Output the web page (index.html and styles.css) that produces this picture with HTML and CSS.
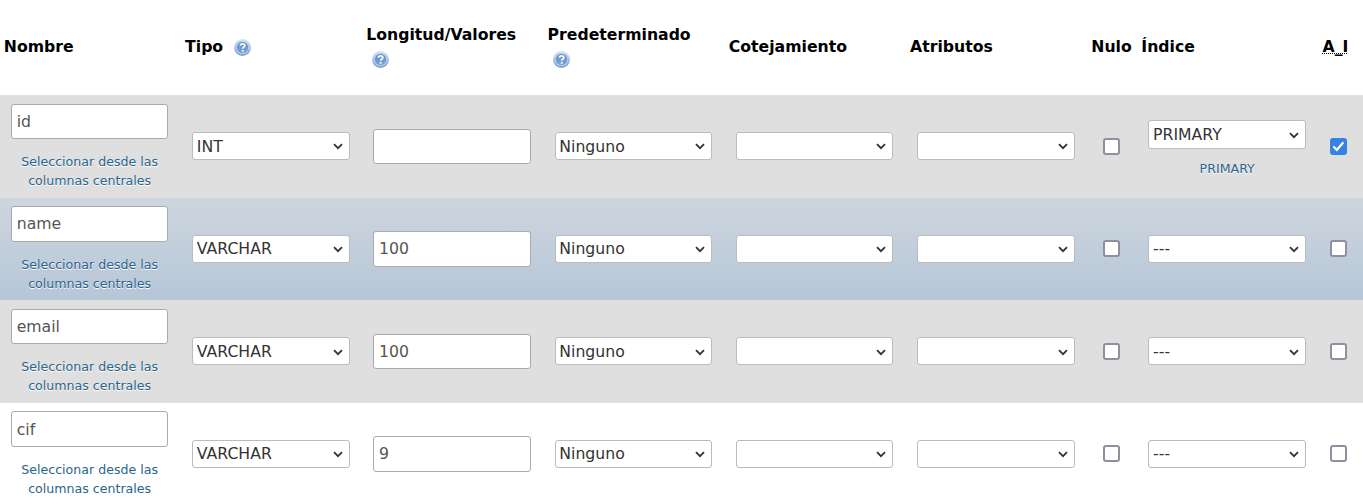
FILE: index.html
```html
<!DOCTYPE html>
<html lang="es">
<head>
<meta charset="utf-8">
<title>Columnas</title>
<link rel="stylesheet" href="styles.css">
</head>
<body>
<svg width="0" height="0" class="defs">
  <defs>
    <linearGradient id="ring" x1="0" y1="0" x2="0" y2="1"><stop offset="0" stop-color="#dce8f6"/><stop offset="1" stop-color="#7f9ec8"/></linearGradient>
    <linearGradient id="disc" x1="0" y1="0" x2="0" y2="1"><stop offset="0" stop-color="#5f8cc6"/><stop offset="1" stop-color="#79a5d8"/></linearGradient>
    <symbol id="help" viewBox="0 0 17 17">
      <circle cx="8.5" cy="8.5" r="8.5" fill="url(#ring)"/>
      <circle cx="8.5" cy="8.5" r="6.6" fill="#b4cdea"/>
      <circle cx="8.5" cy="8.5" r="5.6" fill="url(#disc)"/>
      <path d="M6.4 6.7C6.5 4.3 10.8 4.3 10.8 6.6C10.8 8.1 8.7 8 8.7 9.7M8.7 10.9V12.7" fill="none" stroke="#f4f8fd" stroke-width="1.9"/>
    </symbol>
    <symbol id="chevron" viewBox="0 0 10 7"><path d="M1 1.2L5 5.2L9 1.2" fill="none" stroke="#333" stroke-width="1.8"/></symbol>
  </defs>
</svg>
<main class="columns">
  <div class="row head">
    <div class="title">Nombre</div>
    <div class="title">Tipo <svg class="help"><use href="#help"/></svg></div>
    <div class="title">Longitud/Valores <svg class="help"><use href="#help"/></svg></div>
    <div class="title">Predeterminado <svg class="help"><use href="#help"/></svg></div>
    <div class="title">Cotejamiento</div>
    <div class="title">Atributos</div>
    <div class="title">Nulo</div>
    <div class="title">Índice</div>
    <div class="title"><abbr>A_I</abbr></div>
  </div>
  <div class="row odd">
    <div class="name"><input class="text" value="id"><a class="link">Seleccionar desde las columnas centrales</a></div>
    <div class="cell"><div class="pick"><select><option>INT</option></select><svg><use href="#chevron"/></svg></div></div>
    <div class="cell"><input class="text" value=""></div>
    <div class="cell"><div class="pick"><select><option>Ninguno</option></select><svg><use href="#chevron"/></svg></div></div>
    <div class="cell"><div class="pick"><select><option></option></select><svg><use href="#chevron"/></svg></div></div>
    <div class="cell"><div class="pick"><select><option></option></select><svg><use href="#chevron"/></svg></div></div>
    <div class="check"><span class="box"></span></div>
    <div class="cell index"><div class="pick"><select><option>PRIMARY</option></select><svg><use href="#chevron"/></svg></div><a class="link">PRIMARY</a></div>
    <div class="check"><span class="box checked"><svg viewBox="0 0 17 17"><path d="M3.9 9L6.8 11.9L12.8 5" fill="none" stroke="#fff" stroke-width="2.2" stroke-linecap="round"/></svg></span></div>
  </div>
  <div class="row marked">
    <div class="name"><input class="text" value="name"><a class="link">Seleccionar desde las columnas centrales</a></div>
    <div class="cell"><div class="pick"><select><option>VARCHAR</option></select><svg><use href="#chevron"/></svg></div></div>
    <div class="cell"><input class="text" value="100"></div>
    <div class="cell"><div class="pick"><select><option>Ninguno</option></select><svg><use href="#chevron"/></svg></div></div>
    <div class="cell"><div class="pick"><select><option></option></select><svg><use href="#chevron"/></svg></div></div>
    <div class="cell"><div class="pick"><select><option></option></select><svg><use href="#chevron"/></svg></div></div>
    <div class="check"><span class="box"></span></div>
    <div class="cell"><div class="pick"><select><option>---</option></select><svg><use href="#chevron"/></svg></div></div>
    <div class="check"><span class="box"></span></div>
  </div>
  <div class="row odd">
    <div class="name"><input class="text" value="email"><a class="link">Seleccionar desde las columnas centrales</a></div>
    <div class="cell"><div class="pick"><select><option>VARCHAR</option></select><svg><use href="#chevron"/></svg></div></div>
    <div class="cell"><input class="text" value="100"></div>
    <div class="cell"><div class="pick"><select><option>Ninguno</option></select><svg><use href="#chevron"/></svg></div></div>
    <div class="cell"><div class="pick"><select><option></option></select><svg><use href="#chevron"/></svg></div></div>
    <div class="cell"><div class="pick"><select><option></option></select><svg><use href="#chevron"/></svg></div></div>
    <div class="check"><span class="box"></span></div>
    <div class="cell"><div class="pick"><select><option>---</option></select><svg><use href="#chevron"/></svg></div></div>
    <div class="check"><span class="box"></span></div>
  </div>
  <div class="row">
    <div class="name"><input class="text" value="cif"><a class="link">Seleccionar desde las columnas centrales</a></div>
    <div class="cell"><div class="pick"><select><option>VARCHAR</option></select><svg><use href="#chevron"/></svg></div></div>
    <div class="cell"><input class="text" value="9"></div>
    <div class="cell"><div class="pick"><select><option>Ninguno</option></select><svg><use href="#chevron"/></svg></div></div>
    <div class="cell"><div class="pick"><select><option></option></select><svg><use href="#chevron"/></svg></div></div>
    <div class="cell"><div class="pick"><select><option></option></select><svg><use href="#chevron"/></svg></div></div>
    <div class="check"><span class="box"></span></div>
    <div class="cell"><div class="pick"><select><option>---</option></select><svg><use href="#chevron"/></svg></div></div>
    <div class="check"><span class="box"></span></div>
  </div>
</main>
</body>
</html>
```
FILE: styles.css
```css
* { box-sizing: border-box; }
body { margin: 0; height: 504px; overflow: hidden; background: #fff; font-family: "DejaVu Sans", sans-serif; font-size: 15.7px; color: #000; }
.defs { display: block; }
.columns { width: 1363px; }
.row { display: grid; grid-template-columns: repeat(6, 181.25px) 50px 181.3px 44.2px; height: 102.55px; }
.head { height: 95px; align-items: center; }
.title { padding-left: 3.8px; font-weight: bold; line-height: 24.6px; padding-bottom: 0.6px; }
.title abbr { text-decoration: underline dotted 1px; text-decoration-skip-ink: none; text-underline-offset: 1px; }
.help { width: 17px; height: 17px; margin: 0 14px 0 5.4px; vertical-align: -3.6px; }
.odd { background: #dfdfdf; text-shadow: 0 1px 0 #fff; }
.marked { background: linear-gradient(#ced6df, #b6c6d7); text-shadow: 0 1px 0 #fff; }
.name { padding: 8.6px 13px 0 11px; display: flex; flex-direction: column; }
.cell { padding: 0 12.8px 0 10.9px; display: flex; flex-direction: column; justify-content: center; }
.text, .pick select { font: inherit; width: 100%; border: 1px solid #aaa; border-radius: 3px; background: #fff; text-shadow: none; margin: 0; outline: none; }
.text { height: 35.4px; padding: 0 4.7px 0.2px; color: #555; }
.name .text { flex: none; }
.row:last-child .name .text { padding-top: 1px; }
.pick { display: grid; align-items: center; }
.pick > * { grid-area: 1 / 1; }
.pick select { appearance: none; height: 28px; padding: 0.7px 3.7px 0; color: #333; border-color: #bbb; line-height: 24px; }
.pick svg { width: 10px; height: 7px; justify-self: end; margin: 1.4px 7px 0 0; pointer-events: none; }
.link { font-size: 12.6px; line-height: 19px; color: #2b648d; text-align: center; }
.name .link { margin: 13px 6px 0; }
.index { padding-top: 5.6px; }
.index .pick select { height: 28.6px; }
.index .link { margin-top: 10.4px; }
.check { display: flex; align-items: center; padding: 0 0 0.4px 15.5px; }
.check:last-child { padding-left: 11.2px; }
.box { width: 17px; height: 17px; border: 2px solid #8f8f9d; border-radius: 3px; background: #fff; }
.checked { border: 0; background: #3584e4; }
.checked svg { display: block; width: 17px; height: 17px; }
```
